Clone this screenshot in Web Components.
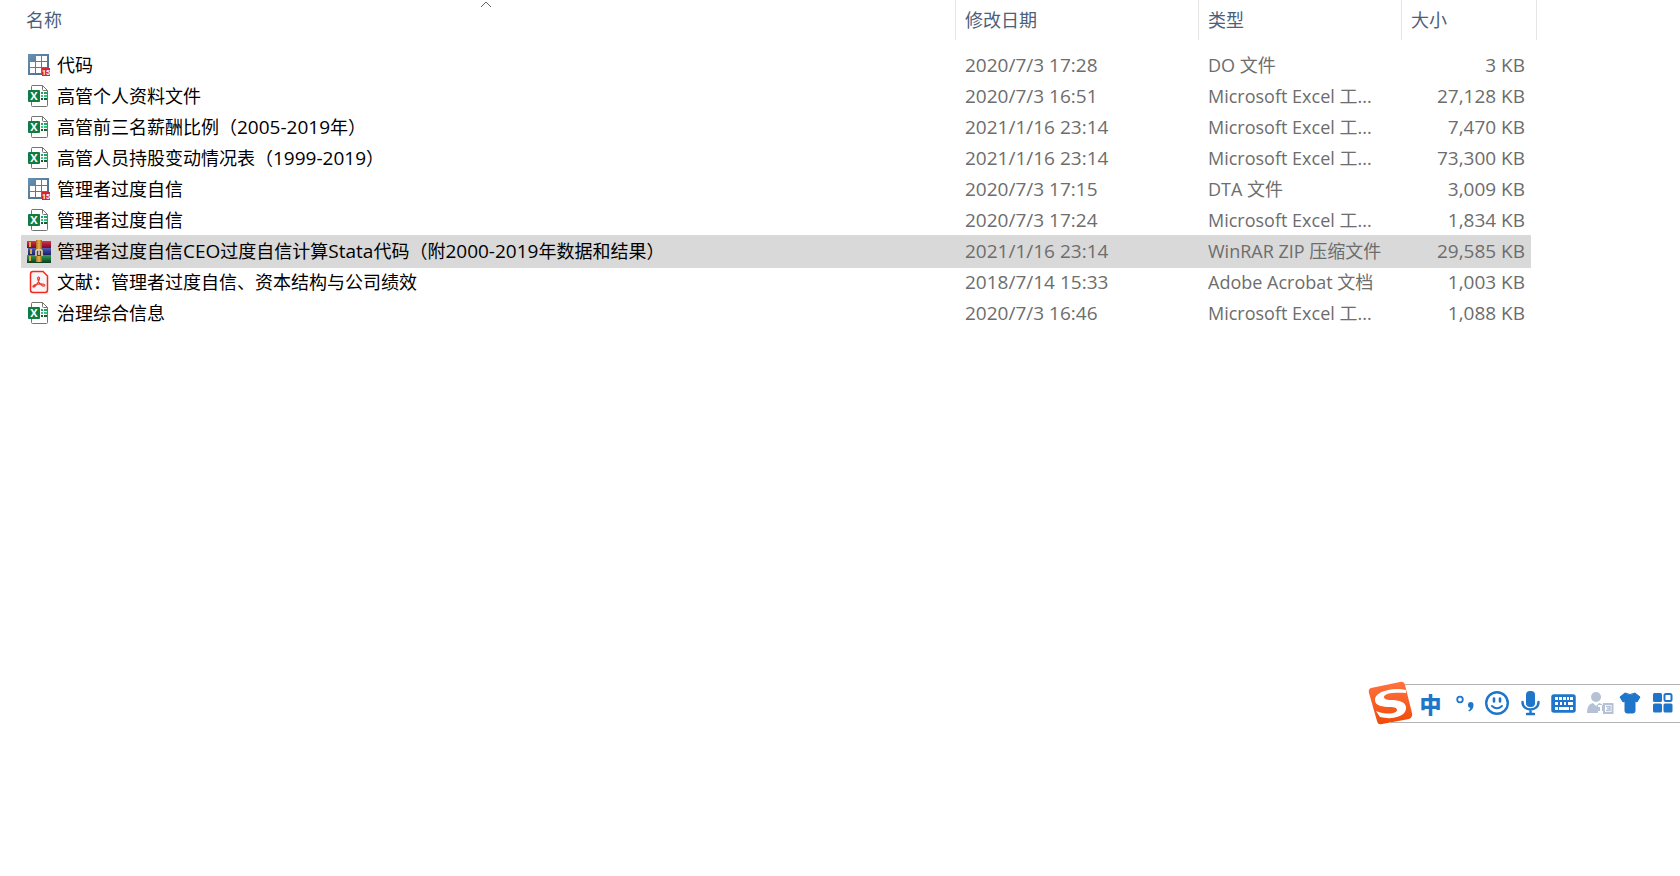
<!DOCTYPE html>
<html lang="zh-CN">
<head>
<meta charset="utf-8">
<title>文件列表</title>
<style>
  body {
    margin: 0;
    min-height: 100vh;
    background: #fff;
    font-family: "Open Sans", "Noto Sans CJK SC", sans-serif;
    font-size: 18px;
  }
</style>
</head>
<body>
<file-list></file-list>
<ime-bar></ime-bar>

<script>
const FILE_ICONS = {
  stata: `
    <defs><linearGradient id="g" x2="1" y2="1"><stop stop-color="#6791b2"/><stop offset="1" stop-color="#46698a"/></linearGradient></defs>
    <path fill="url(#g)" d="M1 1h21v21H1z"/>
    <path fill="#fff" d="M9 3h5v5H9zM15 3h5v5h-5zM3 9h5v5H3zM9 9h5v5H9zM15 9h5v5h-5zM3 15h5v5H3zM9 15h5v5H9z"/>
    <path fill="#d9242c" d="M15 15h8v8h-8z"/>
    <text x="19" y="22" font-size="7" font-weight="700" text-anchor="middle" fill="#fff" font-family="Roboto, sans-serif">15</text>`,
  excel: `
    <path fill="#fff" stroke="#747474" d="M5 1.500h10.500l5 5v15q0 1-1 1H5.500q-1 0-1-1V2.500q0-1 1-1z"/>
    <path fill="none" stroke="#747474" d="M15.500 1.500v4q0 1 1 1h4"/>
    <path fill="#21a366" d="M14 8h2v2h-2zM17 8h3v2h-3z"/>
    <path fill="#33c481" d="M14 11h2v2h-2zM17 11h3v2h-3z"/>
    <path fill="#185c37" d="M14 14h2v2h-2zM17 14h3v2h-3z"/>
    <rect x="1" y="6" width="12" height="12" rx="1" fill="#107c41"/>
    <text x="7" y="16" font-size="11" font-weight="700" text-anchor="middle" fill="#fff" font-family="Open Sans, sans-serif">X</text>`,
  zip: `
    <defs>
      <linearGradient id="r" x2="0" y2="1"><stop stop-color="#d83a50"/><stop offset=".4" stop-color="#b81c3c"/><stop offset="1" stop-color="#6e1028"/></linearGradient>
      <linearGradient id="b" x2="0" y2="1"><stop stop-color="#5660b8"/><stop offset=".4" stop-color="#35409c"/><stop offset="1" stop-color="#1b2258"/></linearGradient>
      <linearGradient id="n" x2="0" y2="1"><stop stop-color="#3a9c5c"/><stop offset=".4" stop-color="#217a42"/><stop offset="1" stop-color="#0c3a20"/></linearGradient>
      <linearGradient id="s"><stop stop-color="#a86c1c"/><stop offset=".5" stop-color="#efb544"/><stop offset="1" stop-color="#9a5f18"/></linearGradient>
    </defs>
    <path fill="url(#r)" d="M0 2h24v7H0z"/>
    <path fill="url(#b)" d="M1 9h23v7H1z"/>
    <path fill="url(#n)" d="M0 16h24v8H0z"/>
    <path fill="#d9a93c" d="M2 3h2v5H2zM3 10h2v5H3zM2 17h2v5H2z"/>
    <path fill="url(#s)" d="M9 1h6v22H9z"/>
    <path fill="#5c4028" d="M8 11h8v6H8z"/>
    <path fill="none" stroke="#e6ddcf" stroke-width="1.500" d="M9 17v-5q0-1 1-1h4q1 0 1 1v5M12 12v4"/>`,
  pdf: `
    <path fill="#f7f5f5" stroke="#f52a1c" stroke-width="1.500" d="M6 1.500h10L20.500 6v14q0 2.500-2.500 2.500H6q-2.500 0-2.500-2.500V4Q3.500 1.500 6 1.500z"/>
    <path fill="none" stroke="#ee3a2d" stroke-width="1.200" d="M11.500 7c1.800 0 .8 3.500-1 6.300-1.700 2.800-4 4.500-4.500 3.400-.6-1.200 3.500-2.700 7-2.900 3.400-.2 5.200.8 4.800 1.800-.5 1.200-3.300.2-5.200-2.400C10.700 10.700 10 7 11.500 7z"/>`
};

const FILES = [
  { icon: "stata", name: "代码", date: "2020/7/3 17:28", type: "DO 文件", size: "3 KB" },
  { icon: "excel", name: "高管个人资料文件", date: "2020/7/3 16:51", type: "Microsoft Excel 工...", size: "27,128 KB" },
  { icon: "excel", name: "高管前三名薪酬比例（2005-2019年）", date: "2021/1/16 23:14", type: "Microsoft Excel 工...", size: "7,470 KB" },
  { icon: "excel", name: "高管人员持股变动情况表（1999-2019）", date: "2021/1/16 23:14", type: "Microsoft Excel 工...", size: "73,300 KB" },
  { icon: "stata", name: "管理者过度自信", date: "2020/7/3 17:15", type: "DTA 文件", size: "3,009 KB" },
  { icon: "excel", name: "管理者过度自信", date: "2020/7/3 17:24", type: "Microsoft Excel 工...", size: "1,834 KB" },
  { icon: "zip", name: "管理者过度自信CEO过度自信计算Stata代码（附2000-2019年数据和结果）", date: "2021/1/16 23:14", type: "WinRAR ZIP 压缩文件", size: "29,585 KB", selected: true },
  { icon: "pdf", name: "文献：管理者过度自信、资本结构与公司绩效", date: "2018/7/14 15:33", type: "Adobe Acrobat 文档", size: "1,003 KB" },
  { icon: "excel", name: "治理综合信息", date: "2020/7/3 16:46", type: "Microsoft Excel 工...", size: "1,088 KB" }
];

class FileIcon extends HTMLElement {
  constructor() {
    super();
    this.attachShadow({ mode: "open" });
  }

  connectedCallback() {
    this.shadowRoot.innerHTML = `
      <style>
        :host { display: block; flex: none; width: 24px; height: 25px; }
        svg { display: block; }
      </style>
      <svg width="24" height="25" viewBox="0 0 24 25" aria-hidden="true">${FILE_ICONS[this.getAttribute("kind")]}</svg>
    `;
  }
}

customElements.define("file-icon", FileIcon);

class FileList extends HTMLElement {
  constructor() {
    super();
    this.attachShadow({ mode: "open" });
    this.shadowRoot.innerHTML = `
      <style>
        :host { display: block; padding: 0 143px 0 21px; }
        table {
          width: 100%;
          table-layout: fixed;
          border-spacing: 0;
          line-height: 31px;
          white-space: nowrap;
        }
        .date { width: 243px; }
        .type { width: 203px; }
        .size { width: 130px; }
        .edge { width: 6px; }
        th, td { padding: 0; text-align: left; }
        th {
          position: relative;
          height: 40px;
          padding-left: 9px;
          box-sizing: border-box;
          border-left: 1px solid #e5e5e5;
          color: #4c607a;
          font-weight: 400;
        }
        th:first-child { padding-left: 5px; border: 0; }
        th.edge { padding: 0; border-left: 0; border-right: 1px solid #e5e5e5; }
        .sort { position: absolute; top: 0; left: 50%; margin-left: -10px; }
        tbody::before { content: ""; display: block; height: 10px; }
        td { height: 31px; padding-left: 10px; color: #6d6d6d; }
        td:first-child { padding-left: 6px; color: #000; }
        td.size { padding: 0 6px 0 0; text-align: right; }
        .name { display: flex; align-items: center; gap: 6px; height: 31px; }
        .latin { font-size: 19px; }
        .kind .latin { font-size: 18px; }
        .selected td {
          background: #d9d9d9;
          box-shadow: 0 -1px #d9d9d9, 0 1px #d9d9d9;
        }
      </style>
      <table>
        <thead>
          <tr>
            <th scope="col">名称
              <svg class="sort" width="16" height="10" viewBox="0 0 16 10" aria-hidden="true"><path d="M3 7l5-5 5 5" fill="none" stroke="#666"/></svg>
            </th>
            <th scope="col" class="date">修改日期</th>
            <th scope="col" class="type">类型</th>
            <th scope="col" class="size">大小</th>
            <th class="edge"></th>
          </tr>
        </thead>
        <tbody>${FILES.map((file) => this.#row(file)).join("")}</tbody>
      </table>
    `;
  }

  #text(value) {
    return value.replace(/[\x20-\x7e]+/g, '<span class="latin">$&</span>');
  }

  #row({ icon, name, date, type, size, selected }) {
    return `
      <tr${selected ? ' class="selected" aria-selected="true"' : ""}>
        <td><div class="name"><file-icon kind="${icon}"></file-icon><div>${this.#text(name)}</div></div></td>
        <td>${this.#text(date)}</td>
        <td class="kind">${this.#text(type)}</td>
        <td class="size">${this.#text(size)}</td>
      </tr>`;
  }
}

customElements.define("file-list", FileList);

class ImeBar extends HTMLElement {
  constructor() {
    super();
    this.attachShadow({ mode: "open" });
    this.shadowRoot.innerHTML = `
      <style>
        :host {
          position: fixed;
          right: 0;
          bottom: 150px;
          display: flex;
          align-items: center;
          color: #1f75c9;
        }
        .logo { position: relative; z-index: 1; flex: none; margin-right: -22px; }
        .bar {
          display: flex;
          height: 37px;
          padding: 0 2px 0 23px;
          border: solid #b4b4b4;
          border-width: 1px 0;
          background: #fff;
        }
        button {
          width: 33px;
          padding: 0;
          border: 0;
          background: none;
          color: inherit;
          font: 900 22px/36px "Noto Sans CJK SC", sans-serif;
        }
        button svg { display: block; overflow: visible; margin: auto; }
      </style>
      <svg class="logo" width="46" height="46" viewBox="0 0 46 46" aria-hidden="true">
        <defs><linearGradient id="o" x2="0" y2="1"><stop stop-color="#ff7340"/><stop offset="1" stop-color="#f04a08"/></linearGradient></defs>
        <path fill="url(#o)" d="M4 8L33 2q4-1 5 3l7 28q1 4-3 6l-27 5q-4 1-5-3L2 13q-1-4 2-5z"/>
        <path fill="#fff" d="M39 10C27 7 8 11 8 20c0 6 8 7 15 7 5 0 7 1 7 3 0 4-11 5-21 1l4 6c11 3 25 0 26-8 1-7-7-9-15-9-5 0-7-1-7-3 0-4 10-5 22-4z"/>
      </svg>
      <div class="bar">
        <button aria-label="中文">中</button>
        <button aria-label="标点">
          <svg width="24" height="26" viewBox="0 0 24 26">
            <circle cx="8" cy="9.500" r="2.800" fill="none" stroke="currentColor" stroke-width="1.800"/>
            <path fill="currentColor" d="M18.500 12a3 3 0 0 1 3 3.200c0 3-1.800 5.300-4.500 6.300l-.8-1.200c1.300-.6 2-1.400 2-2.400a3 3 0 0 1 .3-5.900z"/>
          </svg>
        </button>
        <button aria-label="表情">
          <svg width="26" height="26" viewBox="0 0 26 26" fill="none" stroke="currentColor" stroke-width="2.400" stroke-linecap="round">
            <circle cx="13" cy="13" r="10.800"/>
            <path d="M10 8.500v3M16 8.500v3" stroke-width="2.600"/>
            <path d="M8 16q5 4.500 10 0" stroke-width="2"/>
          </svg>
        </button>
        <button aria-label="语音">
          <svg width="26" height="26" viewBox="0 0 26 26">
            <rect x="9" y="1" width="9" height="16" rx="4" fill="currentColor"/>
            <path fill="none" stroke="currentColor" stroke-width="2.400" stroke-linecap="round" d="M5.500 12c0 10 16 10 16 0M13.500 20v4M10 24h7"/>
          </svg>
        </button>
        <button aria-label="软键盘">
          <svg width="26" height="26" viewBox="0 0 26 26">
            <rect x="2" y="5" width="23" height="17" rx="2" fill="currentColor" stroke="currentColor" stroke-width="1.500"/>
            <path fill="#fff" d="M5 7h3v3H5zM9 7h3v3H9zM13 7h3v3h-3zM17 7h2v3h-2zM20 7h3v3h-3zM5 12h3v3H5zM10 12h2v3h-2zM14 12h2v3h-2zM18 12h5v3h-5zM5 17h3v3H5zM9 17h10v3H9zM20 17h3v3h-3z"/>
          </svg>
        </button>
        <button aria-label="登录">
          <svg width="26" height="26" viewBox="0 0 26 26">
            <circle cx="13" cy="7" r="5" fill="#b5c2d6"/>
            <path fill="#b5c2d6" d="M4 23q0-9 6-10l3 3 3-3q6 1 6 10z"/>
            <path fill="#fff" d="M15 15h4v6h2v2h-6v-2h2v-4h-2z"/>
            <path fill="#fff" stroke="#b5c2d6" stroke-width="2" d="M21 14h8.500v9H21z"/>
            <path fill="none" stroke="#b5c2d6" stroke-width="1.500" d="M23 16.500h4v4h-4M24 18.500h3"/>
          </svg>
        </button>
        <button aria-label="皮肤">
          <svg width="26" height="26" viewBox="0 0 26 26">
            <path fill="currentColor" stroke="currentColor" stroke-width="1" stroke-linejoin="round" d="M9 3q5 3 10 0l5 4-3 5-2-1v10q0 2-2 2h-6q-2 0-2-2V11l-2 1-3-5z"/>
          </svg>
        </button>
        <button aria-label="工具箱">
          <svg width="26" height="26" viewBox="0 0 26 26" fill="currentColor">
            <rect x="4" y="3" width="9" height="9" rx="1.500"/>
            <rect x="15.500" y="4" width="7" height="7" rx="1.500" fill="none" stroke="currentColor" stroke-width="2"/>
            <rect x="4" y="13.500" width="9" height="9" rx="1.500"/>
            <rect x="14.500" y="13.500" width="9" height="9" rx="1.500"/>
          </svg>
        </button>
      </div>
    `;
  }
}

customElements.define("ime-bar", ImeBar);
</script>
</body>
</html>
